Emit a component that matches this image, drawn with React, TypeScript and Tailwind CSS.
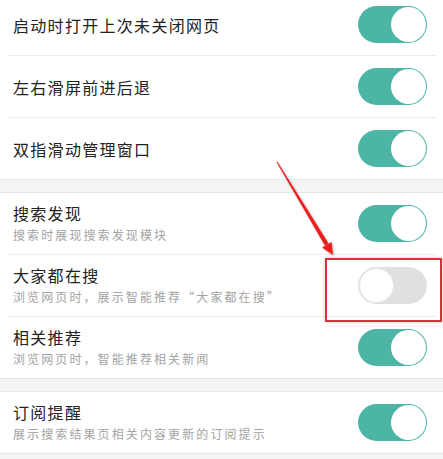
const sections: Item[][] = [
  [
    { title: "启动时打开上次未关闭网页", on: true },
    { title: "左右滑屏前进后退", on: true },
    { title: "双指滑动管理窗口", on: true },
  ],
  [
    { title: "搜索发现", desc: "搜索时展现搜索发现模块", on: true },
    { title: "大家都在搜", desc: "浏览网页时，展示智能推荐“大家都在搜”", on: false, highlight: true },
    { title: "相关推荐", desc: "浏览网页时，智能推荐相关新闻", on: true },
  ],
  [{ title: "订阅提醒", desc: "展示搜索结果页相关内容更新的订阅提示", on: true }],
];

type Item = {
  title: string;
  desc?: string;
  on: boolean;
  highlight?: boolean;
};

function Toggle({ on }: { on: boolean }) {
  return (
    <div
      className={`relative w-[69px] h-[37px] rounded-full shrink-0 ${
        on ? "bg-[#4cb5a6]" : "bg-[#e0e0e0]"
      }`}
    >
      <div
        className={`absolute top-[1px] w-[35px] h-[35px] rounded-full bg-white ${
          on ? "right-[1px]" : "left-[1px] border border-[#e6e6e6]"
        }`}
      />
    </div>
  );
}

function Row({ item, last }: { item: Item; last: boolean }) {
  return (
    <div className="relative">
      <div className="flex items-center justify-between h-[61px] pl-[13px] pr-[16px]">
        <div className="flex flex-col">
          <span className="text-[16px] leading-[20px] tracking-[1.3px] text-[#222]">{item.title}</span>
          {item.desc && (
            <span className="text-[12px] leading-[18px] tracking-[2.1px] text-[#a3a3a3] mt-[3px]">
              {item.desc}
            </span>
          )}
        </div>
        <Toggle on={item.on} />
      </div>
      {/* red highlight box */}
      {item.highlight && (
        <div className="absolute left-[325px] top-[3px] w-[117px] h-[64px] border-2 border-[#d8333a] shadow-[0_0_3px_rgba(0,0,0,0.25)]" />
      )}
      {!last && <div className="mx-[7px] h-px bg-[#ececec]" />}
    </div>
  );
}

export default function App() {
  return (
    <div
      className="relative w-[443px] h-[459px] overflow-hidden bg-[#f4f4f4]"
      style={{ fontFamily: '"Noto Sans CJK SC", "Noto Sans", sans-serif' }}
    >
      <div className="mt-[-6px] flex flex-col">
        {sections.map((sec, si) => (
          <div
            key={si}
            className={`bg-white border-b border-[#e6e6e6] ${si > 0 ? "border-t mt-[12px]" : ""}`}
          >
            {sec.map((item, i) => (
              <Row key={item.title} item={item} last={i === sec.length - 1} />
            ))}
          </div>
        ))}
      </div>
      {/* annotation arrow */}
      <svg className="absolute left-0 top-0 pointer-events-none" width="443" height="459">
        <defs>
          <filter id="sh" x="-50%" y="-50%" width="200%" height="200%">
            <feDropShadow dx="1" dy="1" stdDeviation="1.2" floodColor="#000" floodOpacity="0.35" />
          </filter>
        </defs>
        <g filter="url(#sh)" fill="#ee1c1c">
          <polygon points="277.4,161.7 276.6,162.3 325.0,245.8 328.6,243.6" />
          <polygon points="333,255 322.1,247.5 331.5,241.9" />
        </g>
      </svg>
    </div>
  );
}
